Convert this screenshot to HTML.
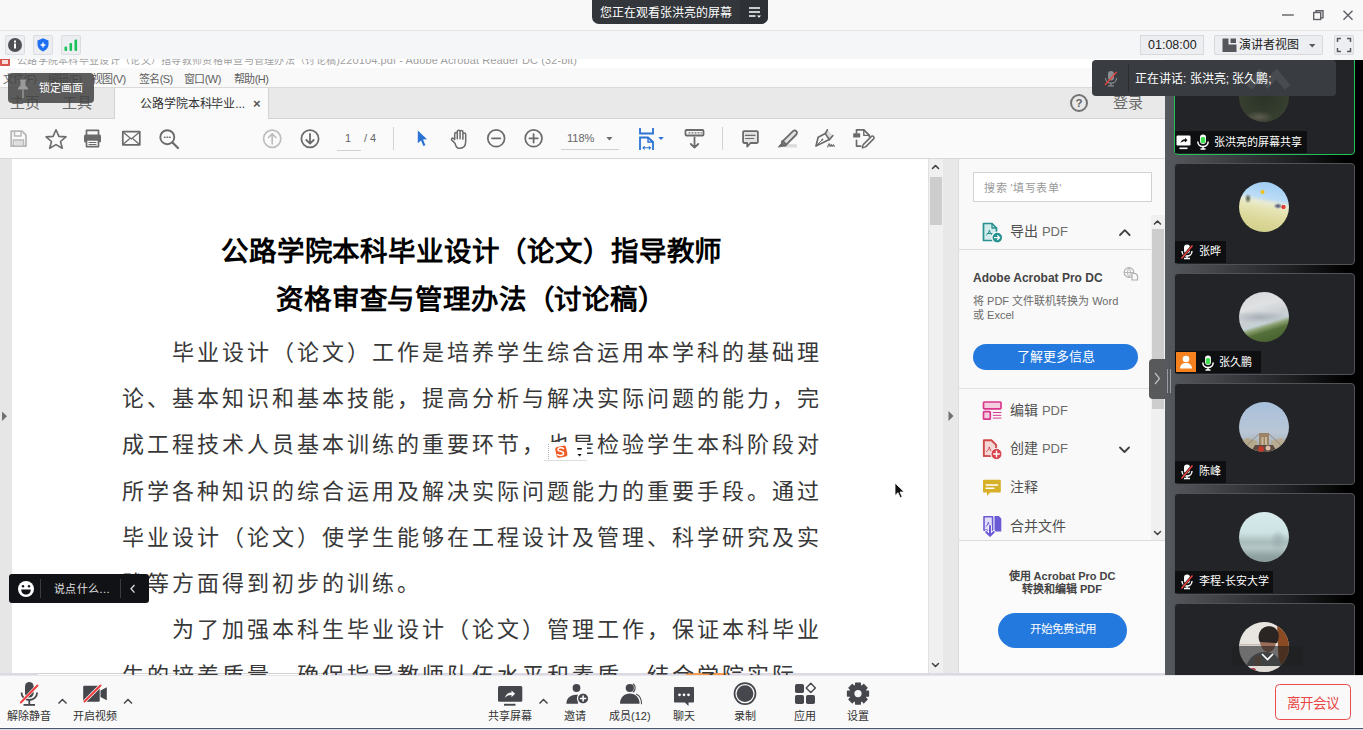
<!DOCTYPE html>
<html lang="zh-CN"><head><meta charset="utf-8">
<style>
*{box-sizing:border-box;margin:0;padding:0}
html,body{width:1363px;height:730px;overflow:hidden;background:#f7f7f8;font-family:"Liberation Sans",sans-serif;position:relative;text-spacing-trim:space-all}
.a{position:absolute}
svg{position:absolute;overflow:visible}
.t{position:absolute;white-space:nowrap;line-height:1}
#body i{display:inline-block;width:24.97px;text-align:center;font-style:normal}
</style></head><body>

<!-- TOP TITLE BAR -->
<div class="a" style="left:0;top:0;width:1363px;height:31px;background:#f8f8f9;border-bottom:1px solid #e3e4e6"></div>
<div class="a" style="left:592px;top:0;width:176px;height:24px;background:#33363b;border-radius:0 0 7px 7px"></div>
<div class="a" style="left:740px;top:0;width:28px;height:24px;background:#2e3136;border-radius:0 0 7px 0"></div>
<div class="t" style="left:600px;top:6.5px;font-size:12px;color:#fff">您正在观看张洪亮的屏幕</div>

<!-- SECOND BAR -->
<div class="a" style="left:0;top:31px;width:1363px;height:28px;background:#f5f6f8"></div>

<!-- window controls -->
<svg style="left:0;top:0" width="1363" height="60" viewBox="0 0 1363 60">
 <g fill="none" stroke="#5f6166" stroke-width="1.4">
  <path d="M1282 15h11.8"/>
  <rect x="1313.7" y="12.5" width="7" height="7"/>
  <path d="M1316 12.5v-1.8h7v7h-2.3"/>
  <path d="M1343.5 10.8l9 9M1352.5 10.8l-9 9"/>
 </g>
 <!-- second bar boxes -->
 <rect x="5.5" y="35.5" width="19" height="19" rx="1.5" fill="#eceef1" stroke="#dcdde1"/>
 <circle cx="15" cy="45" r="7" fill="#4e5056"/>
 <rect x="14" y="43.5" width="2" height="5" fill="#fff"/><rect x="14" y="40.5" width="2" height="2" fill="#fff"/>
 <rect x="33.5" y="35.5" width="19" height="19" rx="1.5" fill="#eceef1" stroke="#dcdde1"/>
 <path d="M43 38.2l5.5 2.2v4.2c0 3.3-2.3 5.6-5.5 6.8-3.2-1.2-5.5-3.5-5.5-6.8v-4.2z" fill="#1f6ff2"/>
 <path d="M40.6 45h4.8M43 42.6v4.8" stroke="#fff" stroke-width="1.4"/>
 <rect x="61.5" y="35.5" width="19" height="19" rx="1.5" fill="#eceef1" stroke="#dcdde1"/>
 <rect x="64.5" y="46.5" width="2.6" height="4.5" rx="1" fill="#16c25a"/>
 <rect x="69.5" y="43" width="2.6" height="8" rx="1" fill="#16c25a"/>
 <rect x="74.5" y="39.5" width="2.6" height="11.5" rx="1" fill="#16c25a"/>
 <rect x="1140.5" y="35.5" width="63" height="19" fill="#eceef1" stroke="#d8d9dd"/>
 <rect x="1214.5" y="35.5" width="108" height="19" rx="1.5" fill="#eceef1" stroke="#d8d9dd"/>
 <path d="M1222.5 38.5h6v6h8v7.5h-14z" fill="#55575c"/>
 <rect x="1230.5" y="38.5" width="5.5" height="4.5" fill="#55575c"/>
 <path d="M1309 44h6.5l-3.25 3.5z" fill="#55575c"/>
 <rect x="1334.5" y="35.5" width="19" height="19" rx="1.5" fill="#eceef1" stroke="#d8d9dd"/>
 <path d="M1337.5 42v-3.5h3.5M1347 38.5h3.5v3.5M1350.5 48v3.5h-3.5M1341 51.5h-3.5v-3.5" fill="none" stroke="#55575c" stroke-width="1.5"/>
 <!-- pill menu icon -->
 <path d="M749 8h11M749 12h11M749 16h6.5" stroke="#fff" stroke-width="1.3"/>
 <path d="M757 15.5h4l-2 2.3z" fill="#fff"/>
</svg>
<div class="t" style="left:1148px;top:38.5px;font-size:12.5px;color:#222">01:08:00</div>
<div class="t" style="left:1239px;top:38.5px;font-size:12px;color:#222">演讲者视图</div>
<!-- SHARED SCREEN AREA -->
<div id="share" class="a" style="left:0;top:0;width:1165px;height:676px;clip-path:inset(59px 0 0 0);background:#fff">
<!-- acrobat title -->
<div class="a" style="left:0;top:59px;width:1165px;height:9px;background:#fff"></div>
<div class="a" style="left:0;top:55px;width:10px;height:11px;background:#d9534f;border-radius:1px"></div><div class="a" style="left:2px;top:60px;width:6px;height:4px;background:#fff;opacity:.8"></div>
<div class="t" style="left:17px;top:50.8px;color:#a0a0a0"><span style="font-size:10px;letter-spacing:0.3px">公路学院本科毕业设计（论文）指导教师资格审查与管理办法（讨论稿</span><span id="tl" style="font-size:11px;letter-spacing:0.1px">)220104.pdf - Adobe Acrobat Reader DC (32-bit)</span></div>
<!-- menubar -->
<div class="a" style="left:0;top:68px;width:1165px;height:20px;background:#f9f9f9;border-bottom:1px solid #dadada"></div>
<div class="t" style="left:3px;top:73.5px;font-size:11px;letter-spacing:-0.6px;color:#606060">文件(F)</div>
<div class="t" style="left:48px;top:73.5px;font-size:11px;letter-spacing:-0.6px;color:#606060">编辑(E)</div>
<div class="t" style="left:92px;top:73.5px;font-size:11px;letter-spacing:-0.6px;color:#606060">视图(V)</div>
<div class="t" style="left:139px;top:73.5px;font-size:11px;letter-spacing:-0.6px;color:#606060">签名(S)</div>
<div class="t" style="left:184px;top:73.5px;font-size:11px;letter-spacing:-0.6px;color:#606060">窗口(W)</div>
<div class="t" style="left:234px;top:73.5px;font-size:11px;letter-spacing:-0.6px;color:#606060">帮助(H)</div>
<!-- tabbar -->
<div class="a" style="left:0;top:88px;width:1165px;height:31px;background:#e9e9e9;border-bottom:1px solid #d4d4d4"></div>
<div class="t" style="left:10px;top:95px;font-size:15px;color:#6a6a6a">主页</div>
<div class="t" style="left:62px;top:95px;font-size:15px;color:#6a6a6a">工具</div>
<div class="a" style="left:114px;top:88px;width:155px;height:31px;background:#fafafa;border-left:1px solid #d4d4d4;border-right:1px solid #d4d4d4"></div>
<div class="t" style="left:140px;top:98px;font-size:12px;color:#333;letter-spacing:-0.1px">公路学院本科毕业...</div>
<div class="t" style="left:253px;top:96.5px;font-size:13px;color:#555;font-weight:bold">×</div>
<div class="a" style="left:1070px;top:94px;width:18px;height:18px;border:2px solid #747474;border-radius:50%"></div>
<div class="t" style="left:1075.5px;top:97.5px;font-size:11.5px;color:#666;font-weight:bold">?</div>
<div class="t" style="left:1113px;top:95px;font-size:15px;color:#6a6a6a">登录</div>
<!-- toolbar -->
<div class="a" style="left:0;top:119px;width:1165px;height:40px;background:#fafafa;border-bottom:1px solid #d8d8d8"></div>
<!-- toolbar icons -->
<svg style="left:0;top:0" width="900" height="160" viewBox="0 0 900 160">
 <g fill="none" stroke="#6b6b6b" stroke-width="1.8" stroke-linejoin="round" stroke-linecap="round">
  <!-- save -->
  <path d="M11.2 131.2h10.8l4 4v10.8h-14.8z" stroke="#b8b8b8"/>
  <path d="M14.5 131.5v4.5h6.5v-4.5" stroke="#b8b8b8" stroke-width="1.5"/>
  <rect x="15" y="140.5" width="7.5" height="5" fill="#dedede" stroke="none"/>
  <path d="M13.5 146v-6h10v6" stroke="#b8b8b8" stroke-width="1.5"/>
  <!-- star -->
  <path d="M56 129.8l2.9 6.6 7.1.5-5.5 4.6 1.8 6.8L56 144.6l-6.3 3.7 1.8-6.8-5.5-4.6 7.1-.5z" stroke-width="1.6"/>
  <!-- printer -->
  <path d="M86.5 134.5v-4.2h12v4.2" stroke-width="1.7"/>
  <rect x="84" y="134.5" width="17" height="8" rx="1.5" fill="#6b6b6b" stroke="none"/>
  <rect x="86.5" y="140" width="12" height="6.6" fill="#fafafa" stroke-width="1.7"/>
  <path d="M89 142.5h7M89 144.5h7" stroke-width="1"/>
  <!-- mail -->
  <rect x="122.8" y="131.6" width="17" height="13.2" stroke-width="1.7"/>
  <path d="M123.5 132.5l7.8 6.5 7.8-6.5M123.5 144l5.8-5M139 144l-5.8-5" stroke-width="1.2"/>
  <!-- zoom search -->
  <circle cx="167.3" cy="137.2" r="7" stroke-width="1.9"/>
  <path d="M172.5 142.5l5.5 5.5" stroke-width="2.2"/>
  <path d="M164.5 137.2h.5M167.1 137.2h.5M169.6 137.2h.5" stroke-width="1.6"/>
  <!-- up/down -->
  <circle cx="272.2" cy="138.8" r="8.6" stroke="#bdbdbd" stroke-width="1.7"/>
  <path d="M272.2 143.8v-9.5M268.5 137.5l3.7-3.6 3.7 3.6" stroke="#bdbdbd" stroke-width="1.7"/>
  <circle cx="310" cy="138.8" r="8.6" stroke-width="1.8"/>
  <path d="M310 133.8v9.5M306.3 140l3.7 3.6 3.7-3.6" stroke-width="1.8"/>
  <!-- minus plus -->
  <circle cx="496.2" cy="138.3" r="8.4" stroke-width="1.7"/>
  <path d="M492 138.3h8.4" stroke-width="1.8"/>
  <circle cx="533.6" cy="138.3" r="8.4" stroke-width="1.7"/>
  <path d="M529.4 138.3h8.4M533.6 134.1v8.4" stroke-width="1.8"/>
  <!-- hand -->
  <path transform="translate(450 129.3)" d="M5 14L1.8 10.8C.9 9.9 1.9 8.3 3.3 9L4.7 10.2V4.4C4.7 2.7 7.3 2.7 7.3 4.4V9.5M7.3 9.5V2.3C7.3.6 10.1.6 10.1 2.3V9.5M10.1 9.5V2.5C10.1.8 12.9.8 12.9 2.5V9.5M12.9 10V5C12.9 3.3 15.7 3.3 15.7 5V12C15.7 16.6 13.3 19 9.8 19H8.8C7 19 6 17.8 5 14" stroke-width="1.5"/>
  <!-- tool (ruler) -->
  <rect x="685.5" y="130" width="18" height="5.5" rx="1" stroke-width="1.8"/>
  <path d="M689 132.8h1M692 132.8h1M695 132.8h1M698 132.8h1M701 132.8h.5" stroke-width="1.3"/>
  <path d="M694.5 137.5v10M690.8 144l3.7 3.6 3.7-3.6" stroke-width="1.8"/>
  <!-- comment -->
  <path d="M744 131.2h13c.6 0 .9.3.9.9v10c0 .6-.3.9-.9.9h-6.5l-3.3 3.6v-3.6h-3.2c-.6 0-.9-.3-.9-.9v-10c0-.6.3-.9.9-.9z" fill="#e2e2e2" stroke-width="1.8"/>
  <path d="M745.5 135.4h9.5M745.5 138.5h8.2" stroke-width="1.1"/>
  <!-- highlighter -->
  <rect x="784.5" y="144.2" width="12.5" height="3.3" fill="#dcdcdc" stroke="none"/>
  <path d="M778.6 146.8l2.6-3.2 2.4 2.2z" fill="#6b6b6b" stroke="#6b6b6b" stroke-width="1"/>
  <path d="M782.3 141.6l10.7-10.4c.9-.9 2.4-.9 3.3 0 .9.9.9 2.4 0 3.3l-10.5 10.7c-.6.6-1.6.6-2.2 0l-1.3-1.3c-.6-.6-.6-1.7 0-2.3z" fill="#e0e0e0" stroke-width="1.8"/>
  <path d="M782.5 141.2l3.4 3.4" stroke-width="2.4"/>
  <!-- sign pen -->
  <path d="M827.3 129.8L832.8 135.6 829.3 139.6 825.3 133.6z" fill="#dcdcdc" stroke="none"/>
  <path d="M816 146L818.2 137.2 825.3 133.6 829.3 139.6z" stroke-width="1.7"/>
  <path d="M816.6 145.4l5.6-5.6" stroke-width="1"/>
  <circle cx="822.4" cy="139.6" r="1" fill="#6b6b6b" stroke="none"/>
  <path d="M825.3 133.6l2-3.8M829.3 139.6l3.5-3.9" stroke-width="1.7"/>
  <path d="M827.6 147l1.5-3.4 1 2.9 1.1-2.1.9 2.1 1.2-1.7 1.1 1.6" stroke-width="1.1"/>
  <!-- edit doc -->
  <rect x="853.2" y="133.2" width="7" height="4.4" rx=".6" fill="#6b6b6b" stroke="none"/>
  <path d="M856.5 133v-3.2h7.3l5.6 5.6v1.2" stroke-width="1.7"/>
  <path d="M863.8 130v5.4h5.4" stroke-width="1.4"/>
  <path d="M856.5 140.3v5.8h4.3" stroke-width="1.7"/>
  <path d="M862.3 147.9l.9-3.3 8-8c.7-.7 1.8-.7 2.4 0 .6.6.6 1.7 0 2.3l-8 8z" stroke-width="1.5"/>
 </g>
 <!-- select arrow -->
 <path d="M417.8 130.5l9.2 8.7-4 .4 2.4 5.6-2 .9-2.4-5.6-3.2 2.8z" fill="#2a72d4"/>
 <!-- fit page -->
 <g fill="none" stroke="#2a72d4" stroke-width="1.8">
  <path d="M640 128v5.5h13v-5.5"/>
  <path d="M640 150v-12.5h8l5 4.5v8"/>
  <path d="M648 137.8v4.2h5" stroke-width="1.4"/>
  <path d="M643 147.8h7.5M644.6 146.3l-1.6 1.5 1.6 1.5M648.9 146.3l1.6 1.5-1.6 1.5" stroke-width="1.1"/>
 </g>
 <path d="M658.2 137h5.6l-2.8 3z" fill="#2a72d4"/>
 <path d="M606.3 137h6.2l-3.1 3.4z" fill="#6b6b6b"/>
 <!-- separators & underlines -->
 <rect x="393" y="127" width="1" height="23" fill="#d4d4d4"/>
 <rect x="722" y="127" width="1" height="23" fill="#d4d4d4"/>
 <rect x="337" y="150" width="24" height="1" fill="#d0d0d0"/>
 <rect x="561" y="149" width="58" height="1" fill="#d0d0d0"/>
</svg>
<div class="t" style="left:345px;top:133px;font-size:11px;color:#666">1</div>
<div class="t" style="left:364px;top:133px;font-size:11px;color:#666">/ 4</div>
<div class="t" style="left:567px;top:133px;font-size:11px;color:#666">118%</div>
<!-- doc area -->
<div class="a" style="left:0;top:159px;width:12px;height:514px;background:#e6e6e6"></div>
<div class="a" style="left:12px;top:159px;width:916px;height:514px;background:#fff"></div>
<div class="a" style="left:928px;top:159px;width:15px;height:514px;background:#f0f0f0;border-left:1px solid #e0e0e0"></div>
<div class="a" style="left:930px;top:177px;width:12px;height:48px;background:#cdcdcd"></div>
<div class="a" style="left:943px;top:159px;width:16px;height:514px;background:#e8e8e8;border-right:1px solid #dcdcdc"></div>
<div class="a" style="left:959px;top:159px;width:206px;height:514px;background:#f9f9f9"></div>
<div class="a" style="left:0;top:673px;width:1165px;height:3px;background:#dcd8e6"></div><div class="a" style="left:38px;top:673px;width:293px;height:3px;background:#fff;border-top:1px solid #d0d0d0"></div>
<div class="a" style="left:686px;top:673px;width:41px;height:2px;background:#f59a4e"></div>
<!-- acrobat right pane -->
<div class="a" style="left:973px;top:172px;width:179px;height:30px;background:#fff;border:1px solid #d2d2d2"></div>
<div class="t" style="left:984px;top:182.5px;font-size:11px;letter-spacing:0.5px;color:#9a9a9a">搜索 '填写表单'</div>
<div class="a" style="left:1151px;top:215px;width:14px;height:326px;background:#f0f0f0"></div>
<div class="a" style="left:1152px;top:229px;width:12px;height:180px;background:#cdcdcd"></div>
<div class="a" style="left:959px;top:249px;width:192px;height:1px;background:#dcdcdc"></div>
<div class="a" style="left:959px;top:388px;width:192px;height:1px;background:#e2e2e2"></div>
<div class="a" style="left:959px;top:540px;width:206px;height:1px;background:#dcdcdc"></div>
<div class="a" style="left:959px;top:541px;width:206px;height:132px;background:#fbfbfb"></div>
<div class="t" style="left:1010px;top:224px;font-size:14px;color:#4f4f4f">导出 <span style="font-size:13px;color:#6b6b6b">PDF</span></div>
<div class="t" style="left:973px;top:272px;font-size:12px;color:#444;font-weight:bold">Adobe Acrobat Pro DC</div>
<div class="t" style="left:973px;top:296px;font-size:11px;color:#6a6a6a">将 PDF 文件联机转换为 Word</div>
<div class="t" style="left:973px;top:310px;font-size:11px;color:#6a6a6a">或 Excel</div>
<div class="a" style="left:973px;top:344px;width:165px;height:26px;background:#2479de;border-radius:13px"></div>
<div class="t" style="left:973px;top:350px;width:165px;text-align:center;font-size:13px;color:#fff">了解更多信息</div>
<div class="t" style="left:1010px;top:403px;font-size:14px;color:#4f4f4f">编辑 <span style="font-size:13px;color:#6b6b6b">PDF</span></div>
<div class="t" style="left:1010px;top:441px;font-size:14px;color:#4f4f4f">创建 <span style="font-size:13px;color:#6b6b6b">PDF</span></div>
<div class="t" style="left:1010px;top:480px;font-size:14px;color:#4f4f4f">注释</div>
<div class="t" style="left:1010px;top:519px;font-size:14px;color:#4f4f4f">合并文件</div>
<div class="t" style="left:959px;top:571px;width:206px;text-align:center;font-size:11px;color:#444;font-weight:bold">使用 Acrobat Pro DC</div>
<div class="t" style="left:959px;top:584px;width:206px;text-align:center;font-size:11px;color:#444;font-weight:bold">转换和编辑 PDF</div>
<div class="a" style="left:998px;top:613px;width:129px;height:35px;background:#2479de;border-radius:18px"></div>
<div class="t" style="left:998px;top:624px;width:129px;text-align:center;font-size:11.5px;color:#fff">开始免费试用</div>
<svg style="left:0;top:0" width="1165" height="676" viewBox="0 0 1165 676">
 <g fill="none" stroke-linecap="round" stroke-linejoin="round">
  <!-- export pdf icon -->
  <path d="M983.5 223.5h8.5l4.5 4.5v12.5h-13z" fill="#d3ebea" stroke="#26918f" stroke-width="1.7"/>
  <path d="M992 223.5v4.5h4.5" stroke="#26918f" stroke-width="1.3"/>
  <path d="M986.5 235c1.3-.9 2.6-2.7 2.9-5 .5 2.6 1.5 4.4 3 5.3M987.3 233.5h4.8" stroke="#26918f" stroke-width="1"/>
  <circle cx="997.3" cy="237.6" r="5.4" fill="#26918f" stroke="#f9f9f9" stroke-width="1.2"/>
  <path d="M994.6 237.6h5M997.6 235.6l2 2-2 2" stroke="#fff" stroke-width="1.3"/>
  <path d="M1120 235l4.8-4.8 4.8 4.8" stroke="#404040" stroke-width="1.8"/>
  <!-- globe -->
  <circle cx="1129" cy="272.5" r="4.8" stroke="#b0b0b0" stroke-width="1.2"/>
  <path d="M1124.5 272.5h9M1129 267.7c-2 2.8-2 6.8 0 9.6M1129 267.7c2 2.8 2 6.8 0 9.6" stroke="#b0b0b0" stroke-width="0.9"/>
  <path d="M1132 273.5h3.5l2 2v4.5h-5.5z" fill="#f9f9f9" stroke="#b0b0b0" stroke-width="1.2"/>
  <!-- edit pdf -->
  <rect x="983.5" y="402" width="17.5" height="6.8" rx=".8" stroke="#d9368c" stroke-width="1.7" fill="#f3cde0"/>
  <rect x="983.5" y="411.6" width="6.8" height="7.6" rx=".8" stroke="#d9368c" stroke-width="1.7" fill="#f3cde0"/>
  <path d="M993.2 412.5h7.8M993.2 415.3h7.8M993.2 418.1h7.8" stroke="#d9368c" stroke-width="1"/>
  <!-- create pdf -->
  <path d="M983.8 440.3h7.7l4.7 4.7v4.5M990 456h-6.2v-15.7" fill="#f4d6d6" stroke="#d04a4a" stroke-width="1.7"/>
  <path d="M984.6 441v14.3h6.6l4.2-5.5v-4.6l-4.3-4.2z" fill="#f4d6d6"/>
  <path d="M983.8 440.3h7.7l4.7 4.7v4M990.5 456h-6.7v-15.7" fill="none" stroke="#d04a4a" stroke-width="1.7"/>
  <path d="M986.6 451.5c1.2-.8 2.4-2.5 2.7-4.6.5 2.4 1.4 4.1 2.8 4.9" stroke="#d04a4a" stroke-width="1"/>
  <circle cx="996.5" cy="454" r="5.6" fill="#d9454d" stroke="#f9f9f9" stroke-width="1"/>
  <path d="M993.7 454h5.6M996.5 451.2v5.6" stroke="#fff" stroke-width="1.4"/>
  <path d="M1120 447.5l4.5 4.5 4.5-4.5" stroke="#404040" stroke-width="1.8"/>
  <!-- comment -->
  <path d="M984 479.8h15.8c.6 0 1 .4 1 1v10.6c0 .6-.4 1-1 1h-9.6l-3.2 3.6v-3.6h-3c-.6 0-1-.4-1-1v-10.6c0-.6.4-1 1-1z" fill="#d8b12a"/>
  <path d="M986.2 485h11.4M986.2 488.3h7.6" stroke="#fff" stroke-width="1.5"/>
  <!-- combine -->
  <path d="M984 516.8h8.6v13.5H984z" fill="#e2def8" stroke="#6b5ad6" stroke-width="1.6"/>
  <path d="M986 526.5c1-.8 2-2.4 2.3-4.3.4 2.1 1.2 3.7 2.3 4.4" stroke="#6b5ad6" stroke-width="1"/>
  <path d="M994.5 516h4.2l2.6 2.6v12.8h-6.8z" fill="#6b5ad6"/>
  <path d="M990 526v9.5M986.2 532l3.8 3.8 3.8-3.8" stroke="#f9f9f9" stroke-width="3.6"/>
  <path d="M990 526v9.5M986.2 532l3.8 3.8 3.8-3.8" stroke="#6b5ad6" stroke-width="2"/>
  <!-- scroll arrows -->
  <path d="M1154.5 224l3-3 3 3" stroke="#404040" stroke-width="1.6"/>
  <path d="M1154.5 531.5l3 3 3-3" stroke="#404040" stroke-width="1.5"/>
  <path d="M932.5 168.5l3-3 3 3" stroke="#404040" stroke-width="1.6"/>
  <path d="M932.5 663.5l3 3 3-3" stroke="#404040" stroke-width="1.5"/>
 </g>
 <path d="M2 411.5v9.5l5-4.75z" fill="#707070"/>
 <path d="M948.5 411v10l5-5z" fill="#707070"/>
</svg>
<!-- doc text -->
<div class="t" style="left:221px;top:238px;font-size:27.5px;font-weight:bold;color:#000;font-family:'Liberation Serif',serif"><i style="display:inline-block;width:27.85px;font-style:normal;text-align:left">公</i><i style="display:inline-block;width:27.85px;font-style:normal;text-align:left">路</i><i style="display:inline-block;width:27.85px;font-style:normal;text-align:left">学</i><i style="display:inline-block;width:27.85px;font-style:normal;text-align:left">院</i><i style="display:inline-block;width:27.85px;font-style:normal;text-align:left">本</i><i style="display:inline-block;width:27.85px;font-style:normal;text-align:left">科</i><i style="display:inline-block;width:27.85px;font-style:normal;text-align:left">毕</i><i style="display:inline-block;width:27.85px;font-style:normal;text-align:left">业</i><i style="display:inline-block;width:27.85px;font-style:normal;text-align:left">设</i><i style="display:inline-block;width:27.85px;font-style:normal;text-align:left">计</i><i style="display:inline-block;width:27.85px;font-style:normal;text-align:left">（</i><i style="display:inline-block;width:27.85px;font-style:normal;text-align:left">论</i><i style="display:inline-block;width:27.85px;font-style:normal;text-align:left">文</i><i style="display:inline-block;width:27.85px;font-style:normal;text-align:left">）</i><i style="display:inline-block;width:27.85px;font-style:normal;text-align:left">指</i><i style="display:inline-block;width:27.85px;font-style:normal;text-align:left">导</i><i style="display:inline-block;width:27.85px;font-style:normal;text-align:left">教</i><i style="display:inline-block;width:27.85px;font-style:normal;text-align:left">师</i></div>
<div class="t" style="left:276px;top:285.5px;font-size:27.5px;font-weight:bold;color:#000;font-family:'Liberation Serif',serif"><i style="display:inline-block;width:27.85px;font-style:normal;text-align:left">资</i><i style="display:inline-block;width:27.85px;font-style:normal;text-align:left">格</i><i style="display:inline-block;width:27.85px;font-style:normal;text-align:left">审</i><i style="display:inline-block;width:27.85px;font-style:normal;text-align:left">查</i><i style="display:inline-block;width:27.85px;font-style:normal;text-align:left">与</i><i style="display:inline-block;width:27.85px;font-style:normal;text-align:left">管</i><i style="display:inline-block;width:27.85px;font-style:normal;text-align:left">理</i><i style="display:inline-block;width:27.85px;font-style:normal;text-align:left">办</i><i style="display:inline-block;width:27.85px;font-style:normal;text-align:left">法</i><i style="display:inline-block;width:27.85px;font-style:normal;text-align:left">（</i><i style="display:inline-block;width:27.85px;font-style:normal;text-align:left">讨</i><i style="display:inline-block;width:27.85px;font-style:normal;text-align:left">论</i><i style="display:inline-block;width:27.85px;font-style:normal;text-align:left">稿</i><i style="display:inline-block;width:27.85px;font-style:normal;text-align:left">）</i></div>
<div id="body" class="a" style="left:121px;top:330px;width:760px;font-size:22px;line-height:46.2px;color:#383838;white-space:nowrap">
<div style="padding-left:50px"><i>毕</i><i>业</i><i>设</i><i>计</i><i>（</i><i>论</i><i>文</i><i>）</i><i>工</i><i>作</i><i>是</i><i>培</i><i>养</i><i>学</i><i>生</i><i>综</i><i>合</i><i>运</i><i>用</i><i>本</i><i>学</i><i>科</i><i>的</i><i>基</i><i>础</i><i>理</i></div>
<div style="padding-left:0px"><i>论</i><i>、</i><i>基</i><i>本</i><i>知</i><i>识</i><i>和</i><i>基</i><i>本</i><i>技</i><i>能</i><i>，</i><i>提</i><i>高</i><i>分</i><i>析</i><i>与</i><i>解</i><i>决</i><i>实</i><i>际</i><i>问</i><i>题</i><i>的</i><i>能</i><i>力</i><i>，</i><i>完</i></div>
<div style="padding-left:0px"><i>成</i><i>工</i><i>程</i><i>技</i><i>术</i><i>人</i><i>员</i><i>基</i><i>本</i><i>训</i><i>练</i><i>的</i><i>重</i><i>要</i><i>环</i><i>节</i><i>，</i><i>也</i><i>是</i><i>检</i><i>验</i><i>学</i><i>生</i><i>本</i><i>科</i><i>阶</i><i>段</i><i>对</i></div>
<div style="padding-left:0px"><i>所</i><i>学</i><i>各</i><i>种</i><i>知</i><i>识</i><i>的</i><i>综</i><i>合</i><i>运</i><i>用</i><i>及</i><i>解</i><i>决</i><i>实</i><i>际</i><i>问</i><i>题</i><i>能</i><i>力</i><i>的</i><i>重</i><i>要</i><i>手</i><i>段</i><i>。</i><i>通</i><i>过</i></div>
<div style="padding-left:0px"><i>毕</i><i>业</i><i>设</i><i>计</i><i>（</i><i>论</i><i>文</i><i>）</i><i>使</i><i>学</i><i>生</i><i>能</i><i>够</i><i>在</i><i>工</i><i>程</i><i>设</i><i>计</i><i>及</i><i>管</i><i>理</i><i>、</i><i>科</i><i>学</i><i>研</i><i>究</i><i>及</i><i>实</i></div>
<div style="padding-left:0px"><i>践</i><i>等</i><i>方</i><i>面</i><i>得</i><i>到</i><i>初</i><i>步</i><i>的</i><i>训</i><i>练</i><i>。</i></div>
<div style="padding-left:50px"><i>为</i><i>了</i><i>加</i><i>强</i><i>本</i><i>科</i><i>生</i><i>毕</i><i>业</i><i>设</i><i>计</i><i>（</i><i>论</i><i>文</i><i>）</i><i>管</i><i>理</i><i>工</i><i>作</i><i>，</i><i>保</i><i>证</i><i>本</i><i>科</i><i>毕</i><i>业</i></div>
<div style="padding-left:0px"><i>生</i><i>的</i><i>培</i><i>养</i><i>质</i><i>量</i><i>，</i><i>确</i><i>保</i><i>指</i><i>导</i><i>教</i><i>师</i><i>队</i><i>伍</i><i>水</i><i>平</i><i>和</i><i>素</i><i>质</i><i>，</i><i>结</i><i>合</i><i>学</i><i>院</i><i>实</i><i>际</i><i>，</i></div>
</div>
</div>


<!-- RIGHT PANEL -->
<div id="rp" class="a" style="left:0;top:0;width:1363px;height:676px;clip-path:inset(60px 0 0 1165px)">
<div class="a" style="left:1165px;top:0;width:198px;height:676px;background:linear-gradient(90deg,#56595e 0%,#45474b 22%,#1e1f21 65%,#000 92%)"></div>
<div class="a" style="left:1355px;top:0;width:8px;height:676px;background:#000"></div>
<div class="a" style="left:1174px;top:53px;width:181px;height:102px;background:#232427;border:1.5px solid #1fc15a;border-radius:4px"></div>
<div class="a" style="left:1174px;top:163px;width:181px;height:102px;background:#232427;border:1px solid #505257;border-radius:4px"></div>
<div class="a" style="left:1174px;top:273px;width:181px;height:102px;background:#232427;border:1px solid #505257;border-radius:4px"></div>
<div class="a" style="left:1174px;top:383px;width:181px;height:102px;background:#232427;border:1px solid #505257;border-radius:4px"></div>
<div class="a" style="left:1174px;top:493px;width:181px;height:102px;background:#232427;border:1px solid #505257;border-radius:4px"></div>
<div class="a" style="left:1174px;top:603px;width:181px;height:102px;background:#232427;border:1px solid #505257;border-radius:4px"></div>
<div class="a" style="left:1239px;top:72px;width:50px;height:50px;border-radius:50%;background:radial-gradient(ellipse 30% 20% at 80% 10%,#c8ccd0 0%,rgba(200,204,208,0) 100%),radial-gradient(ellipse 30% 12% at 40% 90%,#5e5c50 0%,rgba(94,92,80,0) 100%),radial-gradient(circle at 50% 50%,#2a3326 0%,#343d2e 60%,#464a3e 100%)"></div>
<div class="a" style="left:1239px;top:182px;width:50px;height:50px;border-radius:50%;background:radial-gradient(circle 2.5px at 89% 50%,#e0403a 0%,#e0403a 70%,rgba(224,64,58,0) 100%),radial-gradient(ellipse 7% 10% at 18% 33%,#4a5846 0%,rgba(74,88,70,0) 100%),radial-gradient(ellipse 9% 6% at 78% 48%,#3a4070 0%,rgba(58,64,112,0) 100%),radial-gradient(circle 2.5px at 47% 20%,#f0c020 0%,#f0c020 60%,rgba(240,192,32,0) 100%),linear-gradient(191deg,#98c9f2 0%,#bcdcf6 34%,#e8ead2 42%,#e6e4b4 52%,#dcd89a 72%,#cfcb86 100%)"></div>
<div class="a" style="left:1239px;top:292px;width:50px;height:50px;border-radius:50%;background:radial-gradient(ellipse 60% 12% at 40% 50%,rgba(140,150,160,0.55) 0%,rgba(140,150,160,0) 100%),linear-gradient(163deg,#d4d6d8 0%,#dfe1e2 30%,#c9ced2 50%,#c6d2d6 60%,#8aa070 66%,#56703a 74%,#3e5a28 100%)"></div>
<div class="a" style="left:1239px;top:512px;width:50px;height:50px;border-radius:50%;background:radial-gradient(ellipse 16% 22% at 78% 58%,#9fb1b3 0%,rgba(159,177,179,0) 100%),linear-gradient(180deg,#d8ecee 0%,#cde2e3 42%,#a9bcbc 60%,#b4c6c5 72%,#8fa3a2 88%,#8a9c9b 100%)"></div>
<svg style="left:1239px;top:402px" width="50" height="50" viewBox="0 0 50 50">
 <defs><clipPath id="c3"><circle cx="25" cy="25" r="25"/></clipPath>
 <linearGradient id="g3" x1="0" y1="0" x2="0" y2="1"><stop offset="0" stop-color="#a8c0dc"/><stop offset=".6" stop-color="#b9c6d6"/><stop offset=".8" stop-color="#aeb8bf"/><stop offset="1" stop-color="#9a9080"/></linearGradient></defs>
 <g clip-path="url(#c3)">
  <rect width="50" height="50" fill="url(#g3)"/>
  <path d="M0 40l8-4 10 3v11H0z" fill="#b5a88c"/>
  <path d="M50 40l-8-4-10 3v11h18z" fill="#b8ad94"/>
  <rect x="20" y="31" width="10" height="19" fill="#9c8466"/>
  <rect x="22.5" y="35" width="2" height="8" fill="#c9b89c"/><rect x="26" y="35" width="2" height="8" fill="#c9b89c"/>
  <path d="M20 32L6 45M30 32l14 13" stroke="#7a6a58" stroke-width=".6"/>
  <path d="M12 50l4-7h18l4 7z" fill="#5a4a40"/>
  <circle cx="22" cy="47" r="3" fill="#c0392b"/><circle cx="29" cy="46" r="2.5" fill="#d8b8a8"/>
 </g>
</svg>
<svg style="left:1239px;top:622px" width="50" height="50" viewBox="0 0 50 50">
 <defs><clipPath id="c5"><circle cx="25" cy="25" r="25"/></clipPath></defs>
 <g clip-path="url(#c5)">
  <rect width="50" height="50" fill="#e8e4e0"/>
  <rect x="0" y="22" width="22" height="1.5" fill="#c8c0b8"/>
  <path d="M38 0h12v50H40z" fill="#8c4a22"/>
  <path d="M20 12c2-8 12-10 17-5 4 4 3 10 1 14l-16 1c-2-3-3-6-2-10z" fill="#2a2422"/>
  <path d="M21 20c1 6 4 10 8 10s7-3 8-9z" fill="#9a6e58"/>
  <path d="M6 50c2-14 10-20 20-20s16 6 18 20z" fill="#767676"/>
  <rect x="16" y="34" width="6" height="10" rx="3" fill="#8a6a58"/>
  <path d="M8 44h34v6H8z" fill="#e0dcd8"/>
  <circle cx="14" cy="49" r="3" fill="#b02a3a"/>
 </g>
</svg>
<div class="a" style="left:1175px;top:131px;width:132px;height:22px;background:#0e0f10"></div>
<svg style="left:1176px;top:135px" width="15" height="15" viewBox="0 0 15 15"><rect x="0.5" y="0.5" width="14" height="10" rx="1.2" fill="#fff"/><path d="M4.5 8c.5-2.5 2-3.8 4.5-3.8V2.8l2.5 2.4-2.5 2.4V6.2c-2 0-3.3.6-4.5 1.8z" fill="#111"/><rect x="3.5" y="12.5" width="8" height="1.6" fill="#fff"/></svg>
<svg style="left:1196px;top:134px" width="14" height="16" viewBox="0 0 14 16"><rect x="4" y="0.5" width="6" height="9.5" rx="3" fill="#fff"/><rect x="4.8" y="3" width="4.4" height="6.2" rx="1.6" fill="#3ee04f"/><path d="M1.8 7.5c0 3 2.3 5 5.2 5s5.2-2 5.2-5M7 12.5v2.5M4.5 15h5" fill="none" stroke="#fff" stroke-width="1.5"/></svg><div class="t" style="left:1214px;top:137px;font-size:11px;color:#fff">张洪亮的屏幕共享</div>
<div class="a" style="left:1175px;top:241px;width:51px;height:22px;background:#0e0f10"></div>
<svg style="left:1180px;top:244px" width="14" height="16" viewBox="0 0 14 16"><rect x="4" y="0.5" width="6" height="9" rx="3" fill="#fff"/><path d="M2 7c0 3 2.2 5 5 5s5-2 5-5M7 12v2.5M4 14.5h6" fill="none" stroke="#fff" stroke-width="1.4"/><path d="M1.5 14.5L12.5 1.5" stroke="#111" stroke-width="2.6"/><path d="M1.5 14.5L12.5 1.5" stroke="#e8433d" stroke-width="1.5"/></svg><div class="t" style="left:1199px;top:246px;font-size:11px;color:#fff">张晔</div>
<div class="a" style="left:1175px;top:351px;width:86px;height:22px;background:#0e0f10"></div>
<div class="a" style="left:1176px;top:352px;width:20px;height:20px;background:#f5821f"></div>
<svg style="left:1176px;top:352px" width="20" height="20" viewBox="0 0 20 20"><circle cx="10" cy="7" r="3.3" fill="#fff"/><path d="M4 16.5c0-3.5 2.5-5.5 6-5.5s6 2 6 5.5z" fill="#fff"/></svg>
<svg style="left:1201px;top:355px" width="14" height="16" viewBox="0 0 14 16"><rect x="4" y="0.5" width="6" height="9.5" rx="3" fill="#fff"/><rect x="4.8" y="3" width="4.4" height="6.2" rx="1.6" fill="#3ee04f"/><path d="M1.8 7.5c0 3 2.3 5 5.2 5s5.2-2 5.2-5M7 12.5v2.5M4.5 15h5" fill="none" stroke="#fff" stroke-width="1.5"/></svg><div class="t" style="left:1219px;top:357px;font-size:11px;color:#fff">张久鹏</div>
<div class="a" style="left:1175px;top:461px;width:51px;height:22px;background:#0e0f10"></div>
<svg style="left:1180px;top:464px" width="14" height="16" viewBox="0 0 14 16"><rect x="4" y="0.5" width="6" height="9" rx="3" fill="#fff"/><path d="M2 7c0 3 2.2 5 5 5s5-2 5-5M7 12v2.5M4 14.5h6" fill="none" stroke="#fff" stroke-width="1.4"/><path d="M1.5 14.5L12.5 1.5" stroke="#111" stroke-width="2.6"/><path d="M1.5 14.5L12.5 1.5" stroke="#e8433d" stroke-width="1.5"/></svg><div class="t" style="left:1199px;top:466px;font-size:11px;color:#fff">陈峰</div>
<div class="a" style="left:1175px;top:571px;width:98px;height:22px;background:#0e0f10"></div>
<svg style="left:1180px;top:574px" width="14" height="16" viewBox="0 0 14 16"><rect x="4" y="0.5" width="6" height="9" rx="3" fill="#fff"/><path d="M2 7c0 3 2.2 5 5 5s5-2 5-5M7 12v2.5M4 14.5h6" fill="none" stroke="#fff" stroke-width="1.4"/><path d="M1.5 14.5L12.5 1.5" stroke="#111" stroke-width="2.6"/><path d="M1.5 14.5L12.5 1.5" stroke="#e8433d" stroke-width="1.5"/></svg><div class="t" style="left:1199px;top:576px;font-size:11px;color:#fff">李程-长安大学</div>
<div class="a" style="left:1232px;top:646px;width:71px;height:20px;background:rgba(30,31,33,0.6);border-radius:2px"></div>
<svg style="left:1260px;top:652px" width="16" height="10" viewBox="0 0 16 10"><path d="M2 2l5.5 5.5L13 2" fill="none" stroke="#fff" stroke-width="1.6"/></svg>
</div>


<!-- OVERLAYS -->
<!-- speaking banner -->
<div class="a" style="left:1092px;top:60px;width:244px;height:36px;background:#393c41;border-radius:4px"></div>
<div class="a" style="left:1128px;top:64px;width:1px;height:28px;background:#2a2c30"></div>
<svg style="left:1103px;top:70px" width="16" height="17" viewBox="0 0 16 17"><rect x="5" y="1" width="6" height="9.5" rx="3" fill="#8a8d92"/><path d="M2.5 8c0 3 2.4 5.2 5.5 5.2S13.5 11 13.5 8M8 13.2v2.3M5 15.8h6" fill="none" stroke="#8a8d92" stroke-width="1.2"/><path d="M2 15L13.5 2" stroke="#e8433d" stroke-width="1.3"/></svg>
<div class="t" style="left:1135px;top:73px;font-size:12px;color:#fff">正在讲话: 张洪亮; 张久鹏;</div>
<svg style="left:0;top:0" width="1363" height="100" viewBox="0 0 1363 100"><path d="M1249.5 87.5L1259.5 74 1267.5 83.5 1276.5 74 1287.5 87.5" fill="none" stroke="rgba(255,255,255,0.08)" stroke-width="7.5" stroke-linejoin="miter"/></svg>
<!-- lock tooltip -->
<div class="a" style="left:8px;top:73px;width:86px;height:30px;background:rgba(68,68,68,0.86);border-radius:4px"></div>
<svg style="left:16px;top:78px" width="14" height="22" viewBox="0 0 14 22"><path d="M3.5 1.5h7l-1 2v4l2.5 2.5v1.5h-10V10l2.5-2.5v-4z" fill="#9a9a9a"/><rect x="6.3" y="11.5" width="1.4" height="9" fill="#9a9a9a"/></svg>
<div class="t" style="left:39px;top:82.5px;font-size:11px;color:#fff">锁定画面</div>
<!-- chat input -->
<div class="a" style="left:9px;top:574px;width:140px;height:29px;background:#111216;border-radius:3px"></div>
<svg style="left:9px;top:574px" width="140" height="29" viewBox="0 0 140 29">
 <circle cx="17" cy="15" r="8" fill="#fff"/>
 <circle cx="14" cy="12.3" r="1.2" fill="#111216"/><circle cx="20" cy="12.3" r="1.2" fill="#111216"/>
 <path d="M12.2 15.5h9.6c0 3-2.1 5-4.8 5s-4.8-2-4.8-5z" fill="#111216"/>
 <rect x="31" y="5" width="1" height="19" fill="#3c3d42"/>
 <rect x="111" y="5" width="1" height="19" fill="#3c3d42"/>
 <path d="M125.5 11l-3.5 3.8 3.5 3.8" fill="none" stroke="#ddd" stroke-width="1.3"/>
</svg>
<div class="t" style="left:54px;top:584px;font-size:11px;letter-spacing:0.4px;color:#e0e0e0">说点什么...</div>
<!-- splitter handle -->
<div class="a" style="left:1149px;top:359px;width:16px;height:40px;background:#58595b;border-radius:4px 0 0 4px"></div>
<svg style="left:1149px;top:359px" width="30" height="40" viewBox="0 0 30 40"><path d="M6 14l4.5 5.5L6 25" fill="none" stroke="#bdbdbd" stroke-width="1.3"/><path d="M18.5 10v24M21.5 10v24" stroke="#9a9ca0" stroke-width="1"/></svg>
<!-- IME icon -->
<div class="a" style="left:544px;top:442px;width:43px;height:19px;background:#fff;border-bottom:1px solid #dedede"></div>
<div class="a" style="left:548px;top:444px;width:0;height:15px;border-left:1px dotted #b0b0b0"></div>
<svg style="left:540px;top:430px" width="60" height="35" viewBox="0 0 60 35">
 <rect x="15.8" y="16.2" width="11" height="11" rx="2.2" transform="rotate(-12 21.3 21.7)" fill="#f15a24"/>
 <path d="M24 18.8c-1.2-.9-2.5-1.1-3.7-1-1.5.2-2.6 1-2.4 2.1.3 1.8 5.8 1.1 5.7 3.4-.1 1.5-1.6 2.2-3.3 2.2-1.3 0-2.5-.5-3.3-1.2" fill="none" stroke="#fff" stroke-width="1.5"/>
 <rect x="37.2" y="18" width="4.6" height="1.6" fill="#111"/>
 <path d="M37.5 24h4.2l-2.1 2.5z" fill="#111"/>
</svg>
<!-- mouse cursor -->
<svg style="left:894px;top:482px" width="14" height="18" viewBox="0 0 14 18"><path d="M1 1v12.5l3-2.8 2.2 5 2-.9-2.2-4.8h4.2z" fill="#111" stroke="#fff" stroke-width="0.8"/></svg>

<!-- BOTTOM TOOLBAR -->
<div class="a" style="left:0;top:675px;width:1363px;height:52px;background:#f9f9f9;border-top:1px solid #e6e6e8"></div>
<div class="a" style="left:0;top:727px;width:1363px;height:1px;background:#fff"></div><div class="a" style="left:0;top:728px;width:1363px;height:1px;background:#4c5667"></div><div class="a" style="left:0;top:729px;width:1363px;height:1px;background:#d6e0ee"></div>
<svg style="left:0;top:676px" width="1363" height="52" viewBox="0 676 1363 52">
 <g fill="#45474c">
  <!-- mic -->
  <rect x="25" y="682" width="8.6" height="15.5" rx="4.3"/>
  <path d="M21.5 692.5c0 4.5 3.4 7.5 7.8 7.5s7.8-3 7.8-7.5" fill="none" stroke="#45474c" stroke-width="1.8"/>
  <rect x="28.4" y="700" width="1.8" height="4.2"/>
  <rect x="23.5" y="704" width="11.5" height="1.8"/>
  <!-- camera -->
  <rect x="83.2" y="685.8" width="16.5" height="15.9" rx="1.2"/>
  <path d="M100.5 690.5l6.3-3.3v13l-6.3-3.3z"/>
  <!-- share screen -->
  <rect x="498" y="686" width="24.3" height="15.8" rx="1.5"/>
  <rect x="504" y="703.8" width="11.5" height="1.9"/>
  <!-- invite -->
  <circle cx="576.5" cy="688" r="3.9"/>
  <path d="M566.4 703.8c0-5.5 4-9 9.4-9 2.4 0 4.5.6 6.2 1.8-3 1.2-4.2 3.8-4 7.2z"/>
  <circle cx="583.1" cy="698.5" r="5.3"/>
  <!-- members -->
  <circle cx="629.8" cy="688" r="4.1"/>
  <path d="M620 703.8C620 697.4 624.4 693.4 629.8 693.4S639.6 697.4 639.6 703.8z"/>
  <!-- chat -->
  <path d="M675 687h18c.6 0 1 .4 1 1v13.5c0 .6-.4 1-1 1h-4.5v3.4l-3.6-3.4h-9.9c-.6 0-1-.4-1-1V688c0-.6.4-1 1-1z"/>
  <!-- record -->
  <circle cx="745" cy="693.6" r="8.4"/>
  <!-- apps -->
  <rect x="795" y="684" width="9" height="9" rx="1.8"/>
  <rect x="795" y="695" width="9" height="9" rx="1.8"/>
  <rect x="806" y="695" width="9" height="9" rx="1.8"/>
  <!-- gear -->
  <path d="M855.57 685.66 L855.57 683.08 L860.43 683.08 L860.43 685.66 L861.90 686.27 L863.72 684.44 L867.16 687.88 L865.33 689.70 L865.94 691.17 L868.52 691.17 L868.52 696.03 L865.94 696.03 L865.33 697.50 L867.16 699.32 L863.72 702.76 L861.90 700.93 L860.43 701.54 L860.43 704.12 L855.57 704.12 L855.57 701.54 L854.10 700.93 L852.28 702.76 L848.84 699.32 L850.67 697.50 L850.06 696.03 L847.48 696.03 L847.48 691.17 L850.06 691.17 L850.67 689.70 L848.84 687.88 L852.28 684.44 L854.10 686.27Z" stroke="#45474c" stroke-width="1.2" stroke-linejoin="round"/>
 </g>
 <g fill="none" stroke-linecap="round">
  <path d="M20.8 702.5l16.7-17" stroke="#f8f8f9" stroke-width="3.2"/>
  <path d="M20.8 702.5l16.7-17" stroke="#f0393a" stroke-width="1.8"/>
  <path d="M84.5 701.5l16-16" stroke="#f8f8f9" stroke-width="3.2"/>
  <path d="M84.5 701.5l16-16" stroke="#f0393a" stroke-width="1.8"/>
  <path d="M58.5 703.5l4-4 4 4M124 703.5l4-4 4 4M539.5 703.5l4-4 4 4" stroke="#45474c" stroke-width="1.5" stroke-linecap="butt"/>
  <path d="M505 698c.6-3.5 2.8-5.4 6.5-5.4v-2.2l3.6 3.4-3.6 3.4V695c-2.8 0-4.8.9-6.5 3z" fill="#f8f8f9" stroke="none"/>
  <path d="M580.5 698.5h5.2M583.1 695.9v5.2" stroke="#fff" stroke-width="1.5"/>
  <circle cx="583.1" cy="698.5" r="5.6" stroke="#f8f8f9" stroke-width="1.2"/>
  <path d="M633.2 684c2.6 1.8 2.6 6.2 0 8M636.5 694.2c3.4 1.5 5 5 5 9.6" stroke="#45474c" stroke-width="1.1"/>
  <circle cx="745" cy="693.6" r="10.5" stroke="#45474c" stroke-width="1.7"/>
  <path d="M810.8 683.3l4.6 4.6-4.6 4.6-4.6-4.6z" stroke="#45474c" stroke-width="1.4" stroke-linejoin="round"/>
 </g>
 <circle cx="679.5" cy="694.8" r="1.4" fill="#fff"/><circle cx="684" cy="694.8" r="1.4" fill="#fff"/><circle cx="688.5" cy="694.8" r="1.4" fill="#fff"/>
 <circle cx="858" cy="693.6" r="3.6" fill="#f8f8f9"/>
 <rect x="1275.5" y="684.5" width="75" height="35" rx="4" fill="none" stroke="#ea4b4b" stroke-width="1"/>
</svg>
<div class="t" style="left:7px;top:710.5px;font-size:11px;color:#333">解除静音</div>
<div class="t" style="left:73px;top:710.5px;font-size:11px;color:#333">开启视频</div>
<div class="t" style="left:488px;top:710.5px;font-size:11px;color:#333">共享屏幕</div>
<div class="t" style="left:564px;top:710.5px;font-size:11px;color:#333">邀请</div>
<div class="t" style="left:609px;top:710.5px;font-size:11px;color:#333">成员(12)</div>
<div class="t" style="left:673px;top:710.5px;font-size:11px;color:#333">聊天</div>
<div class="t" style="left:734px;top:710.5px;font-size:11px;color:#333">录制</div>
<div class="t" style="left:794px;top:710.5px;font-size:11px;color:#333">应用</div>
<div class="t" style="left:847px;top:710.5px;font-size:11px;color:#333">设置</div>
<div class="t" style="left:1275px;top:696.5px;width:76px;text-align:center;font-size:13.5px;color:#e94545">离开会议</div>


</body></html>
